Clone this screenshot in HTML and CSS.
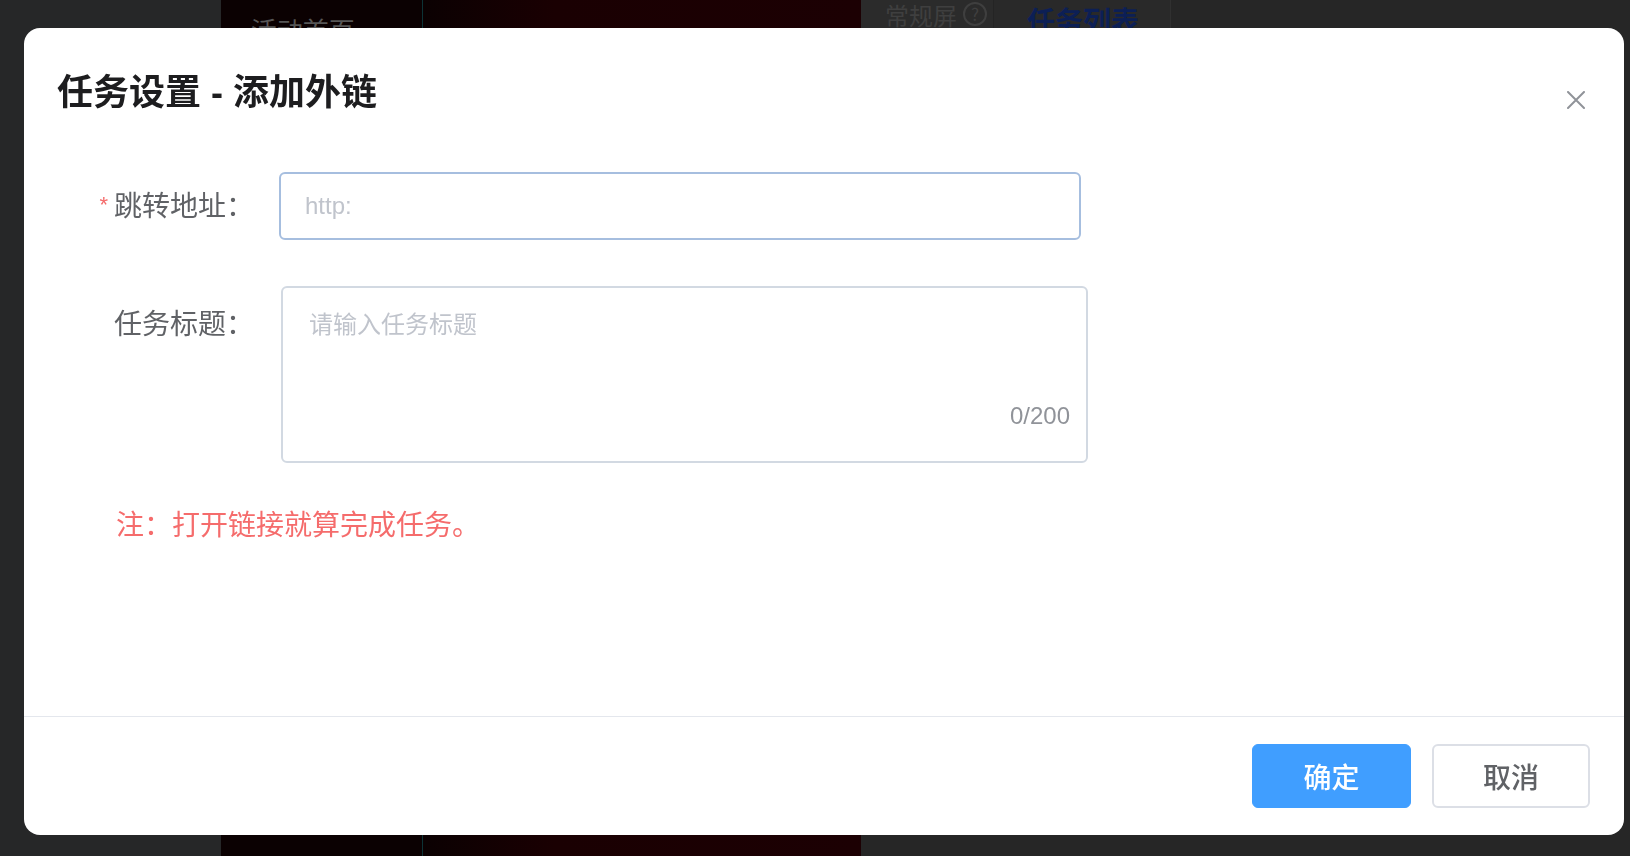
FILE: index.html
```html
<!DOCTYPE html>
<html lang="zh-CN">
<head>
    <meta charset="UTF-8">
    <meta name="viewport" content="width=device-width, initial-scale=1.0">
    <title>任务设置 - 添加外链</title>
    <link rel="stylesheet" href="styles.css">
</head>
<body>
    <!-- Page behind the dialog (dimmed) -->
    <div class="page">
        <div class="sidebar"></div>
        <div class="preview">
            <div class="preview-nav">
                <span class="back">&lsaquo;</span>活动首页
            </div>
            <div class="preview-screen"></div>
        </div>
        <div class="panel">
            <div class="tabs">
                <div class="tab tab-screen">常规屏 <span class="help">?</span></div>
                <div class="tab tab-active">任务列表</div>
            </div>
        </div>
    </div>

    <!-- Dialog -->
    <div class="overlay">
        <div class="dialog">
            <div class="dialog-header">
                <h2 class="dialog-title">任务设置 - 添加外链</h2>
                <button class="dialog-close" aria-label="关闭">
                    <svg viewBox="0 0 18 18" width="18" height="18">
                        <path d="M1 1 L17 17 M17 1 L1 17" stroke="#909399" stroke-width="2" stroke-linecap="round" fill="none"/>
                    </svg>
                </button>
            </div>

            <div class="dialog-body">
                <div class="form-row">
                    <label class="form-label"><span class="required">*</span>跳转地址：</label>
                    <input class="form-input" type="text" placeholder="http:">
                </div>

                <div class="form-row form-row-top">
                    <label class="form-label form-label-top">任务标题：</label>
                    <div class="textarea-wrap">
                        <textarea class="form-textarea" maxlength="200" placeholder="请输入任务标题"></textarea>
                        <span class="word-count">0/200</span>
                    </div>
                </div>

                <p class="note">注：打开链接就算完成任务。</p>
            </div>

            <div class="dialog-footer">
                <button class="btn btn-primary">确定</button>
                <button class="btn btn-default">取消</button>
            </div>
        </div>
    </div>
</body>
</html>
```

FILE: styles.css
```css
/* Basic reset */
* {
    box-sizing: border-box;
    margin: 0;
    padding: 0;
}
body {
    font-family: "Liberation Sans", "Noto Sans CJK SC", sans-serif;
    background-color: #262728;
    overflow: hidden;
}

/* Dimmed page behind the dialog */
.page {
    display: flex;
    height: 100vh;
}
.sidebar {
    width: 221px;
    background-color: #262728;
}
.preview {
    width: 640px;
    display: flex;
}
.preview-nav {
    width: 202px;
    background-color: #0b0102;
    border-right: 1px solid #0d3336;
    color: #565656;
    font-size: 26px;
    line-height: 36px;
    padding: 12px 0 0 16px;
    white-space: nowrap;
    font-family: "Noto Sans CJK SC", sans-serif;
}
.preview-nav .back {
    margin-right: 6px;
}
.preview-screen {
    flex: 1;
    background: linear-gradient(90deg, #0b0102 0%, #1a0002 30%, #1c0003 100%);
}
.panel {
    flex: 1;
    background-color: #262626;
}
.tabs {
    display: flex;
    align-items: flex-start;
}
.tab {
    font-family: "Noto Sans CJK SC", sans-serif;
    white-space: nowrap;
}
.tab-screen {
    width: 132px;
    height: 40px;
    background-color: #2b2b2b;
    color: #3f3f3f;
    font-size: 24px;
    line-height: 28px;
    padding: 1px 0 0 24px;
    display: flex;
    align-items: flex-start;
    gap: 6px;
}
.help {
    display: inline-block;
    width: 24px;
    height: 24px;
    border: 2px solid #3f3f3f;
    border-radius: 50%;
    font-size: 17px;
    line-height: 20px;
    text-align: center;
    margin-top: 1px;
}
.tab-active {
    width: 178px;
    height: 40px;
    background-color: #292929;
    border-left: 1px solid #242424;
    border-right: 1px solid #303030;
    color: #0c1f55;
    font-size: 28px;
    font-weight: bold;
    line-height: 28px;
    padding: 6px 0 0 33px;
}

/* Overlay and dialog */
.overlay {
    position: fixed;
    left: 0;
    top: 0;
    width: 100%;
    height: 100%;
    padding: 28px 0 0 24px;
}
.dialog {
    width: 1600px;
    height: 807px;
    background-color: #fff;
    border-radius: 16px;
    overflow: hidden;
    display: flex;
    flex-direction: column;
}
.dialog-header {
    display: flex;
    justify-content: space-between;
    align-items: flex-start;
    padding: 40px 39px 0 33px;
}
.dialog-title {
    font-size: 36px;
    line-height: 49px;
    font-weight: 600;
    color: #1d1d1f;
}
.dialog-close {
    background: none;
    border: none;
    cursor: pointer;
    margin-top: 23px;
    width: 18px;
    height: 18px;
    display: flex;
}

/* Form */
.dialog-body {
    flex: 1;
    padding-top: 54px;
}
.form-row {
    display: flex;
    align-items: center;
}
.form-row-top {
    align-items: flex-start;
    margin-top: 45px;
}
.form-label {
    width: 255px;
    padding-right: 25px;
    text-align: right;
    font-size: 28px;
    line-height: 68px;
    color: #606266;
    white-space: nowrap;
}
.form-label-top {
    padding-top: 5px;
}
.required {
    color: #f56c6c;
    font-size: 22px;
    margin-right: 6px;
    vertical-align: 4px;
}
.form-input {
    width: 802px;
    height: 68px;
    padding: 0 24px;
    font-family: inherit;
    font-size: 24px;
    color: #606266;
    border: 2px solid #a6bedf;
    border-radius: 6px;
    outline: none;
}
.form-input::placeholder,
.form-textarea::placeholder {
    color: #c0c4cc;
}
.textarea-wrap {
    position: relative;
    margin-left: 2px;
}
.form-textarea {
    display: block;
    width: 807px;
    height: 177px;
    padding: 19px 26px;
    font-family: inherit;
    font-size: 24px;
    line-height: 36px;
    color: #606266;
    border: 2px solid #d2d9e2;
    border-radius: 6px;
    resize: none;
    outline: none;
}
.word-count {
    position: absolute;
    right: 18px;
    bottom: 29px;
    font-size: 24px;
    line-height: 36px;
    color: #909399;
}
.note {
    margin-top: 42px;
    padding-left: 92px;
    font-size: 28px;
    line-height: 42px;
    color: #f56c6c;
}

/* Footer buttons */
.dialog-footer {
    display: flex;
    justify-content: flex-end;
    gap: 21px;
    padding: 27px 34px;
    border-top: 1px solid #e4e7ed;
}
.btn {
    height: 64px;
    border-radius: 6px;
    font-family: inherit;
    font-size: 28px;
    font-weight: 500;
    cursor: pointer;
}
.btn-primary {
    width: 159px;
    background-color: #409eff;
    border: 1px solid #409eff;
    color: #fff;
}
.btn-default {
    width: 158px;
    background-color: #fff;
    border: 2px solid #dcdfe6;
    color: #606266;
}
```
